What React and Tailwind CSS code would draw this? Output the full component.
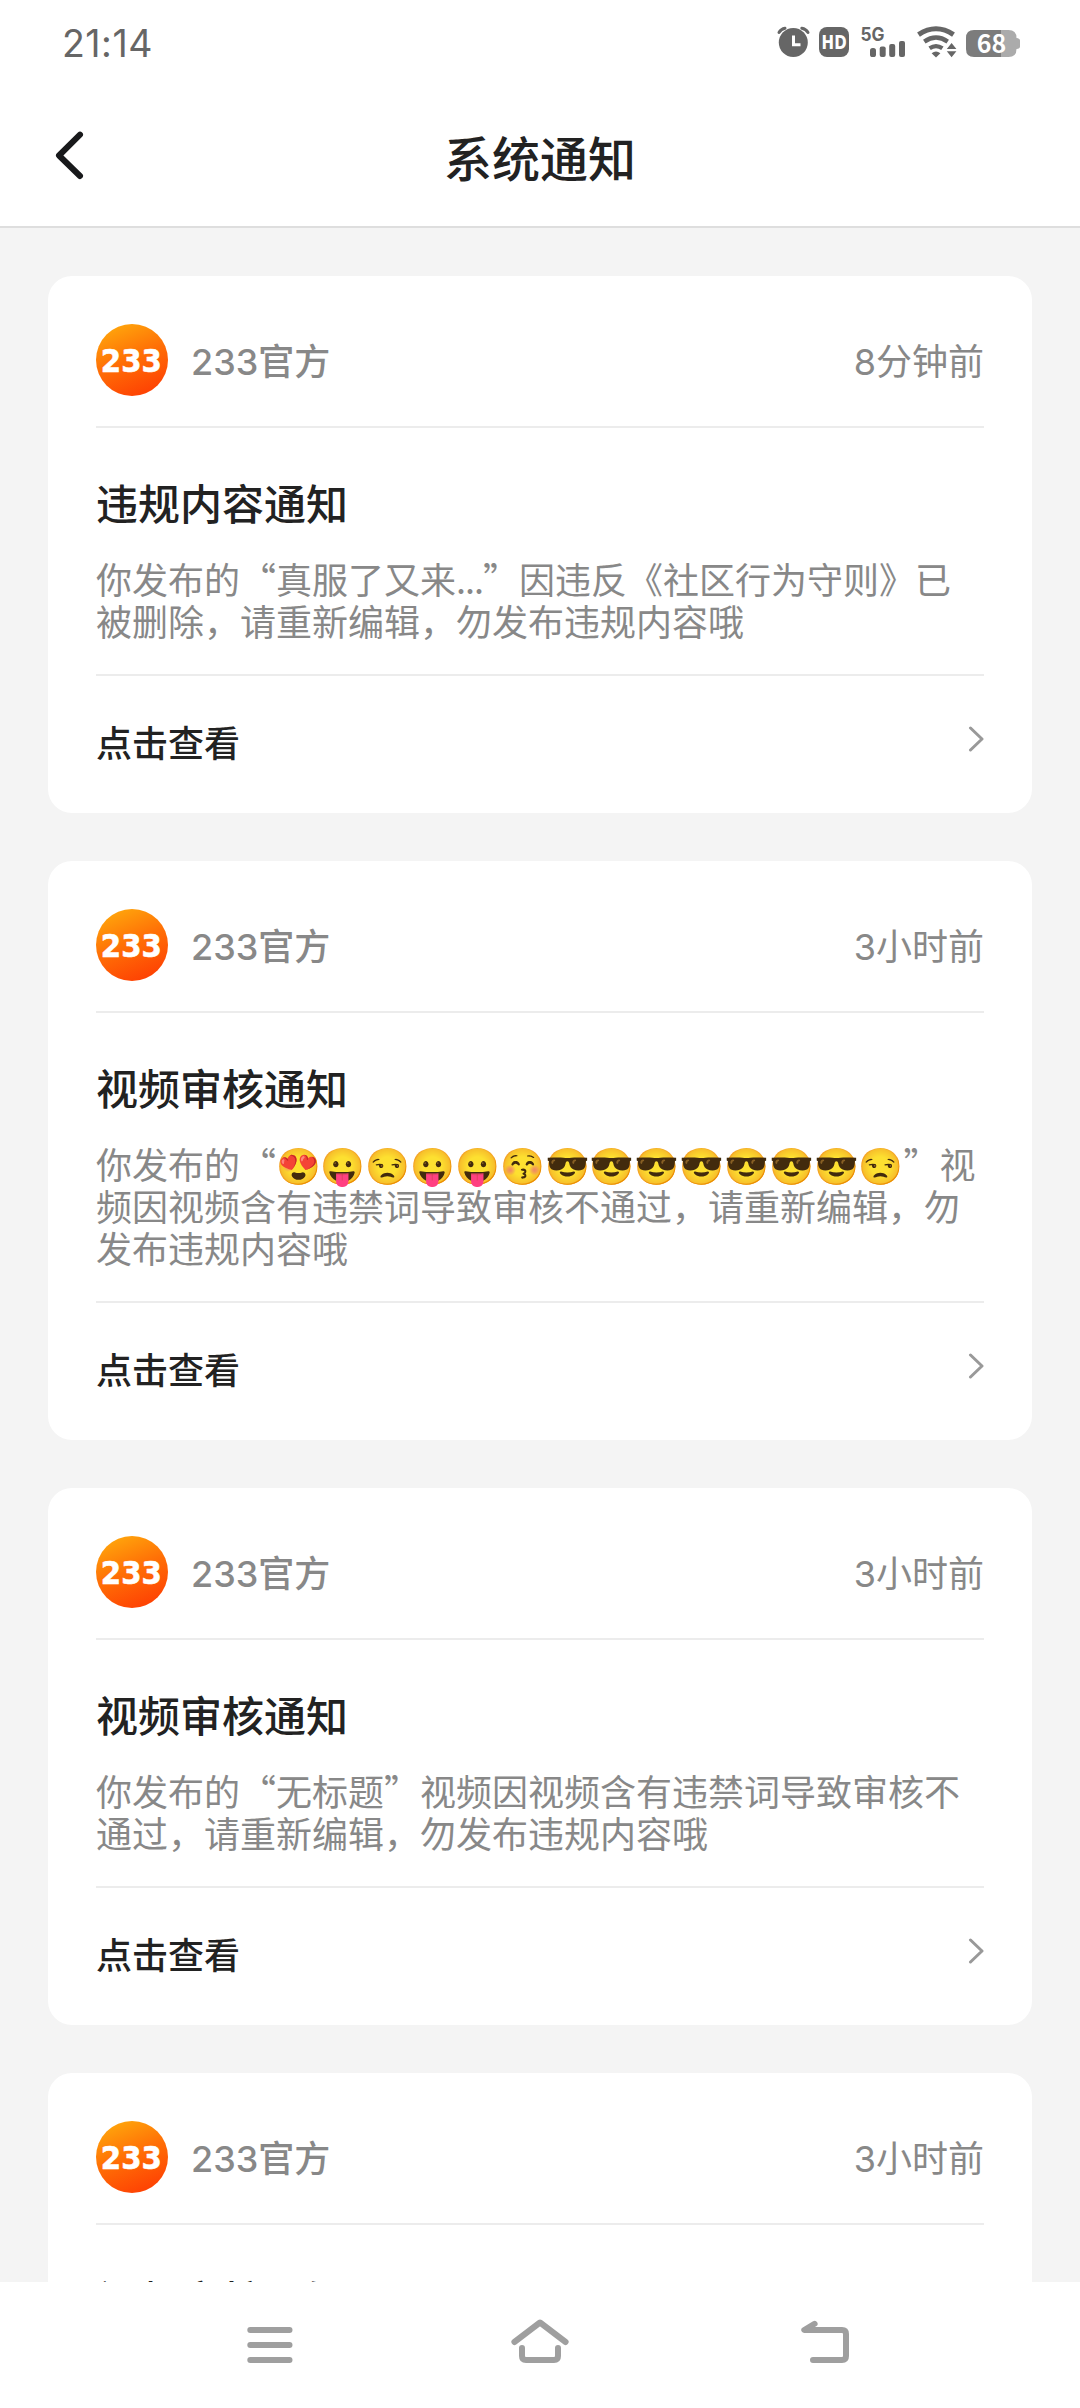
const notices = [
  {
    time: ['8', '分钟前'],
    title: '违规内容通知',
    lines: [
      <>你发布的“真服了又来<span className="tracking-[-1px]">...</span>”因违反《社区行为守则》已</>,
      '被删除，请重新编辑，勿发布违规内容哦',
    ],
  },
  {
    time: ['3', '小时前'],
    title: '视频审核通知',
    lines: [
      '你发布的“😍😛😒😛😛😚😎😎😎😎😎😎😎😒”视',
      '频因视频含有违禁词导致审核不通过，请重新编辑，勿',
      '发布违规内容哦',
    ],
  },
  {
    time: ['3', '小时前'],
    title: '视频审核通知',
    lines: ['你发布的“无标题”视频因视频含有违禁词导致审核不', '通过，请重新编辑，勿发布违规内容哦'],
  },
  {
    time: ['3', '小时前'],
    title: '视频审核通知',
    lines: [],
  },
];

function StatusIcons() {
  return (
    <svg width="244" height="34" viewBox="776 25 244 34" fill="#666" className="-mt-1 block">
      {/* alarm */}
      <circle cx="793.3" cy="42.4" r="14.5" />
      <path d="M779 32.5 Q781 29 785 28.3 M801.8 28.3 Q806 29 808 32.5" fill="none" stroke="#666" strokeWidth="3" strokeLinecap="round" />
      <path d="M793.5 35.5 V44.8 H800.5" fill="none" stroke="#fff" strokeWidth="3" />
      {/* HD */}
      <rect x="819" y="27" width="30" height="30" rx="8" />
      <text x="821.6" y="49.4" fontSize="19.5" fontWeight="700" fill="#fff" textLength="25" lengthAdjust="spacingAndGlyphs" fontFamily="'DejaVu Sans', sans-serif">HD</text>
      {/* 5G and signal */}
      <text x="860.5" y="41" fontSize="18.5" fontWeight="700" textLength="24" lengthAdjust="spacingAndGlyphs" fontFamily="Inter, sans-serif">5G</text>
      <rect x="870" y="48" width="6" height="9" rx="2.6" />
      <rect x="879.7" y="46.5" width="6" height="10.5" rx="2" />
      <rect x="889.2" y="44" width="6" height="13" rx="2" />
      <rect x="899" y="41" width="6" height="16" rx="2" />
      {/* wifi */}
      <g fill="none" stroke="#666">
        <path d="M918.5 34.6 Q936 22.8 953.5 34.6" strokeWidth="5" />
        <path d="M924.3 41.6 Q936 33.6 947.7 41.6" strokeWidth="4.4" />
        <path d="M929.6 48.3 Q936 44 942.4 48.3" strokeWidth="4.2" />
      </g>
      <path d="M931.6 53.2 Q936 50 940.4 53.2 L936 57.4 Z" />
      <path d="M951.6 43 L956.4 49 H946.8 Z M951.6 57.3 L956.4 51.3 H946.8 Z" />
      {/* battery */}
      <path d="M974 30 H1001 V57 H974 Q966 57 966 49 V38 Q966 30 974 30 Z" fill="#7c7c7c" />
      <path d="M1001 30 H1008.5 Q1016.5 30 1016.5 38 Q1020 38.5 1020 40.5 V46.5 Q1020 48.5 1016.5 49 Q1016.5 57 1008.5 57 H1001 Z" fill="#ababab" />
      <text x="976.7" y="53.2" fontSize="25" fontWeight="700" fill="#fff" textLength="29.5" lengthAdjust="spacingAndGlyphs" fontFamily="'Noto Sans CJK SC', sans-serif">68</text>
    </svg>
  );
}

function Avatar() {
  return (
    <svg width="72" height="72" viewBox="0 0 72 72" className="block shrink-0">
      <defs>
        <linearGradient id="avatar" x1="0.2" y1="0" x2="0.62" y2="1">
          <stop offset="0" stopColor="#ffa90c" />
          <stop offset="0.5" stopColor="#ff6f06" />
          <stop offset="1" stopColor="#fe4203" />
        </linearGradient>
      </defs>
      <circle cx="36" cy="36" r="36" fill="url(#avatar)" />
      <text x="4.8" y="47.6" fontSize="31.5" fontWeight="700" fill="#fff" stroke="#fff" strokeWidth="0.6" textLength="61" lengthAdjust="spacingAndGlyphs" fontFamily="'DejaVu Sans', sans-serif">233</text>
    </svg>
  );
}

function Notice({ time, title, lines }) {
  return (
    <article className="shrink-0 rounded-[24px] bg-white px-12">
      <div className="flex h-[152px] items-center border-b-2 border-[#ececec] pt-12 pb-[30px] text-[36px] text-[#888]">
        <Avatar />
        <div className="ml-[23px] font-medium leading-[72px]">
          <span className="font-['Inter']">233</span>官方
        </div>
        <div className="ml-auto leading-[72px]">
          <span className="font-['Inter']">{time[0]}</span>
          {time[1]}
        </div>
      </div>
      <h2 className="pt-[43px] text-[42px] font-medium leading-[62px] text-[#222]">{title}</h2>
      <div className="mt-[24px] border-b-2 border-[#ececec] pb-[33px] text-[36px] text-[#888]">
        {lines.map((line, i) => (
          <p key={i} className="h-[42px] whitespace-nowrap leading-[42px]">{line}</p>
        ))}
      </div>
      <div className="flex h-[137px] items-center justify-between pb-2">
        <span className="text-[36px] font-medium leading-[50px] text-[#222]">点击查看</span>
        <svg width="18" height="30" viewBox="0 0 18 30" fill="none" stroke="#999" strokeWidth="3" strokeLinecap="round" strokeLinejoin="round" className="mb-1 block">
          <path d="M4.5 4 L16 15 L4.5 26" />
        </svg>
      </div>
    </article>
  );
}

export default function App() {
  return (
    <div lang="zh-CN" className="flex h-[2408px] w-[1080px] flex-col overflow-hidden bg-[#f4f4f4] font-['Noto_Sans_CJK_SC','Noto_Color_Emoji',sans-serif]">
      <header className="h-[228px] shrink-0 border-b-2 border-[#dedede] bg-white">
        <div className="flex h-[88px] items-center justify-between pr-[60px] pl-[62px]">
          <span className="font-['Inter'] text-[37.5px] leading-[52px] tracking-[0.5px] text-[#666]">21:14</span>
          <StatusIcons />
        </div>
        <div className="grid h-[138px] grid-cols-[1fr_auto_1fr] items-start px-[53px]">
          <svg width="32" height="54" viewBox="53 128 32 54" fill="none" stroke="#18191b" strokeWidth="6" strokeLinecap="round" strokeLinejoin="round" className="mt-10 block">
            <path d="M80 134.7 L59 155.5 L80 176" />
          </svg>
          <h1 className="mt-8 text-[48px] font-medium leading-[72px] text-[#222]">系统通知</h1>
        </div>
      </header>
      <main className="flex min-h-0 flex-1 flex-col gap-12 overflow-hidden px-12 pt-12">
        {notices.map((n, i) => (
          <Notice key={i} {...n} />
        ))}
      </main>
      <nav className="flex h-[126px] shrink-0 items-center justify-between bg-white px-[225px]">
        <svg width="90" height="60" viewBox="225 2315 90 60" fill="none" stroke="#9f9f9f" strokeWidth="6" strokeLinecap="round" className="block">
          <path d="M250.3 2330 H289.5 M250.3 2345 H289.5 M250.3 2360 H289.5" />
        </svg>
        <svg width="90" height="60" viewBox="495 2315 90 60" fill="none" stroke="#9f9f9f" strokeWidth="6" strokeLinecap="round" strokeLinejoin="round" className="block">
          <path d="M514.4 2342 L540 2322.5 L565.6 2342 M522 2348 V2356 Q522 2360 526 2360 H554 Q558 2360 558 2356 V2348" />
        </svg>
        <svg width="90" height="60" viewBox="765 2315 90 60" fill="none" stroke="#9f9f9f" strokeWidth="6" strokeLinecap="round" strokeLinejoin="round" className="block">
          <path d="M814.6 2323.8 L804.3 2330 H842 Q846 2330 846 2334 V2356 Q846 2360 842 2360 H813" />
        </svg>
      </nav>
    </div>
  );
}
